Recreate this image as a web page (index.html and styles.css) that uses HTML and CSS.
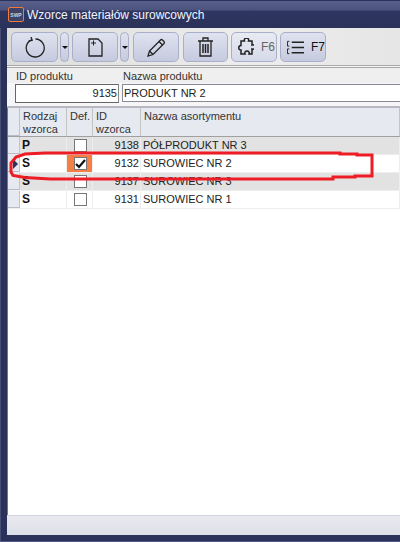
FILE: index.html
```html
<!DOCTYPE html>
<html lang="pl">
<head>
  <meta charset="UTF-8" />
  <title>Wzorce materiałów surowcowych</title>
  <link rel="stylesheet" href="styles.css">
</head>
<body>
  <div class="window">
    <!-- Title bar -->
    <div class="titlebar">
      <div class="app-logo"><span class="logo-text">SWP</span></div>
      <span class="title-text">Wzorce materiałów surowcowych</span>
    </div>

    <div class="client">
      <!-- Toolbar -->
      <div class="toolbar">
        <button class="tool wide first">
          <svg width="20" height="21" viewBox="0 0 20 21" fill="none" stroke="#222" stroke-width="1.300"><path d="M6.500 2.800A9 9 0 1 0 10.500 2"/><path d="M6 0l1.200 3.200L3.600 4.200"/></svg>
        </button>
        <button class="tool drop"><span class="caret"></span></button>
        <button class="tool wide">
          <svg width="15" height="19" viewBox="0 0 15 19" fill="none" stroke="#222" stroke-width="1.300"><path d="M1 1h9l4 4v13H1z"/><path d="M3 5h5M5.500 2.500v5" stroke-width="1"/></svg>
        </button>
        <button class="tool drop"><span class="caret"></span></button>
        <button class="tool wide edit">
          <svg width="19" height="19" viewBox="0 0 19 19" fill="none" stroke="#222" stroke-width="1.300"><path d="M1 18l1.500-5L13.500 2a1.500 1.500 0 0 1 2 0l1.500 1.500a1.500 1.500 0 0 1 0 2L6 16.500z"/><path d="M2.500 13L6 16.500M12 3.500L15.500 7"/></svg>
        </button>
        <button class="tool wide trash">
          <svg width="15" height="20" viewBox="0 0 15 20" fill="none" stroke="#222" stroke-width="1.300"><path d="M0 4h15M5 4V1h5v3M2 4v15h11V4"/><path d="M5 7v9M7.500 7v9M10 7v9" stroke-width="1.500"/></svg>
        </button>
        <button class="tool wide key disabled">
          <svg width="16" height="18" viewBox="0 0 16 18" fill="none" stroke="#222" stroke-width="1.500"><path d="M4 3h2.500a2.200 2.200 0 1 1 4 0H14v4a2.200 2.200 0 1 1 0 4v5h-3a2.200 2.200 0 1 0-4 0H3v-4a2.200 2.200 0 1 1 0-4.500V3z"/></svg>
          <span>F6</span>
        </button>
        <button class="tool wide key">
          <svg width="18" height="15" viewBox="0 0 18 15" fill="none" stroke="#222"><path d="M2.500 1H.500v5h2M2.500 9H.500v5h2" stroke-width="1"/><path d="M5 2h13M5 7.500h13M5 13h13" stroke-width="1.600"/></svg>
          <span>F7</span>
        </button>
      </div>

      <!-- Product fields -->
      <div class="fields">
        <div class="field field-id">
          <label>ID produktu</label>
          <div class="input num">9135</div>
        </div>
        <div class="field field-name">
          <label>Nazwa produktu</label>
          <div class="input">PRODUKT NR 2</div>
        </div>
      </div>

      <!-- Grid -->
      <div class="grid">
        <div class="row head">
          <div class="sel"></div>
          <div class="cell">Rodzaj wzorca</div>
          <div class="cell">Def.</div>
          <div class="cell">ID wzorca</div>
          <div class="cell">Nazwa asortymentu</div>
        </div>
        <div class="row alt">
          <div class="sel"></div>
          <div class="cell type">P</div>
          <div class="cell def"><span class="check"></span></div>
          <div class="cell id">9138</div>
          <div class="cell">PÓŁPRODUKT NR 3</div>
        </div>
        <div class="row current">
          <div class="sel"><span class="pointer"></span></div>
          <div class="cell type">S</div>
          <div class="cell def active"><span class="check on">
            <svg width="11" height="10" viewBox="0 0 11 10" fill="none" stroke="#111" stroke-width="2.200"><path d="M1 5l3 3 6-7"/></svg>
          </span></div>
          <div class="cell id">9132</div>
          <div class="cell">SUROWIEC NR 2</div>
        </div>
        <div class="row alt">
          <div class="sel"></div>
          <div class="cell type">S</div>
          <div class="cell def"><span class="check"></span></div>
          <div class="cell id">9137</div>
          <div class="cell">SUROWIEC NR 3</div>
        </div>
        <div class="row">
          <div class="sel"></div>
          <div class="cell type">S</div>
          <div class="cell def"><span class="check"></span></div>
          <div class="cell id">9131</div>
          <div class="cell">SUROWIEC NR 1</div>
        </div>
      </div>

      <div class="statusbar"></div>
    </div>

    <!-- Red marker drawn over the grid -->
    <svg class="marker" width="400" height="542" viewBox="0 0 400 542" fill="none" stroke="#ee1c25" stroke-width="3">
      <path d="M45 153H340V154H357V155H372V176H355V177H333V179H50L25 177.500L13 175.500L11 172V163L16 157L25 154Z"/>
    </svg>
  </div>
</body>
</html>
```
FILE: styles.css
```css
html, body {
  margin: 0;
  padding: 0;
}

body {
  font-family: "Liberation Sans", Arial, sans-serif;
  font-size: 11px;
  color: #222;
  background: #2b3259;
}

.window {
  position: relative;
  width: 400px;
  height: 542px;
  display: flex;
  flex-direction: column;
  overflow: hidden;
  background: #2b3259;
  border-bottom: 1px solid #535a86;
  box-sizing: border-box;
  box-shadow: inset 1px 0 #474e7a;
}

.titlebar {
  height: 28px;
  flex: none;
  display: flex;
  align-items: center;
  gap: 3px;
  padding: 0 0 0 8px;
  box-sizing: border-box;
  background: linear-gradient(#59608a 0, #4c537f 9px, #2f3660 10px, #2b3259 100%);
  border-top: 1px solid #2b3259;
}

.app-logo {
  width: 16px;
  height: 15px;
  flex: none;
  display: flex;
  align-items: center;
  justify-content: center;
  box-sizing: border-box;
  border: 1px solid #f07a3c;
  border-radius: 2px;
  background: #3d4468;
}

.logo-text {
  font-size: 5px;
  font-weight: bold;
  color: #cfd2dc;
}

.title-text {
  font-family: "Liberation Sans", sans-serif;
  font-size: 12px;
  color: #eef4ff;
}

.client {
  flex: 1;
  display: flex;
  flex-direction: column;
  margin: 0 0 6px 7px;
  background: #fff;
  min-height: 0;
}

.toolbar {
  height: 37px;
  flex: none;
  display: flex;
  gap: 2px;
  padding: 4px 0 0 4px;
  box-sizing: border-box;
  background: linear-gradient(90deg, #dcdcdc, #ededed 60%, #e6e6e6);
}

.tool {
  height: 30px;
  padding: 0;
  display: flex;
  align-items: center;
  justify-content: center;
  border: 1px solid #a9aec9;
  border-radius: 5px;
  box-sizing: border-box;
  background: linear-gradient(#dfe2ef, #c5cadf);
  font-family: "Liberation Sans", sans-serif;
  font-size: 12px;
  color: #111;
}

.wide {
  width: 46px;
}

.first {
  width: 47px;
}

.drop {
  width: 9px;
  margin-right: 1px;
}

.caret {
  width: 0;
  height: 0;
  border-left: 3px solid transparent;
  border-right: 3px solid transparent;
  border-top: 3px solid #111;
}

.edit {
  margin-left: 1px;
}

.trash {
  width: 45px;
  margin-left: 2px;
  margin-right: 1px;
}

.key {
  margin-right: 1px;
  justify-content: flex-start;
  gap: 7px;
  padding-left: 6px;
}

.disabled {
  background: linear-gradient(#e9ebf3, #d6d9e8);
}

.disabled span {
  color: #666;
}

.fields {
  height: 43px;
  flex: none;
  display: flex;
  gap: 3px;
  padding: 2px 0 0 8px;
  box-sizing: border-box;
  border-top: 3px double #a8a8a8;
  border-bottom: 2px solid #b8b8c0;
  background: linear-gradient(#efefef 15px, #f6f6f8 15px);
}

.field {
  display: flex;
  flex-direction: column;
}

.field label {
  height: 14px;
  line-height: 12px;
  padding-left: 1px;
  color: #333;
  white-space: nowrap;
}

.field-id {
  width: 104px;
}

.field-name {
  flex: 1;
}

.input {
  height: 19px;
  line-height: 17px;
  padding: 0 1px;
  background: #fff;
  border: 1px solid #666;
  border-right-color: #888;
  box-sizing: border-box;
}

.field-name .input {
  height: 18px;
  border-color: #8a8a94;
  border-right: none;
}

.num {
  text-align: right;
}

.grid {
  flex: 1;
  min-height: 0;
  background: #fff;
  border-left: 1px solid #777;
}

.row {
  display: grid;
  grid-template-columns: 12px 47px 26px 48px 1fr;
  height: 18px;
  box-sizing: border-box;
  border-bottom: 1px solid #eee;
  line-height: 17px;
}

.head {
  height: 29px;
  line-height: 13px;
  background: #e6e9ef;
  border-bottom: 1px solid #a0a0a0;
  color: #333;
}

.alt {
  background: #e2e2e2;
}

.sel {
  display: flex;
  align-items: center;
  background: #e6e9ef;
  border-right: 1px solid #c4c4c4;
  box-shadow: inset 0 -1px #b8bcc8;
}

.pointer {
  width: 0;
  height: 0;
  border-top: 5px solid transparent;
  border-bottom: 5px solid transparent;
  border-left: 5px solid #2b3259;
  margin-left: 5px;
}

.cell {
  padding: 0 1px 0 2px;
  border-right: 1px solid #eee;
  overflow: hidden;
  white-space: nowrap;
}

.head .cell {
  padding: 2px 1px 0 3px;
  white-space: normal;
  border-right-color: #c4c4c4;
}

.type {
  font-size: 12px;
  font-weight: bold;
  color: #111;
}

.id {
  text-align: right;
}

.def {
  display: flex;
  align-items: center;
  justify-content: center;
}

.active {
  background: #f57f45;
}

.check {
  width: 13px;
  height: 13px;
  display: flex;
  align-items: center;
  justify-content: center;
  background: #fff;
  border: 1px solid #777;
  box-sizing: border-box;
}

.statusbar {
  height: 20px;
  flex: none;
  background: linear-gradient(#e9eaf0, #dcdfe6);
  border-top: 1px solid #d4d4e0;
  box-sizing: border-box;
}

.marker {
  position: absolute;
  left: 0;
  top: 0;
  pointer-events: none;
}
```
